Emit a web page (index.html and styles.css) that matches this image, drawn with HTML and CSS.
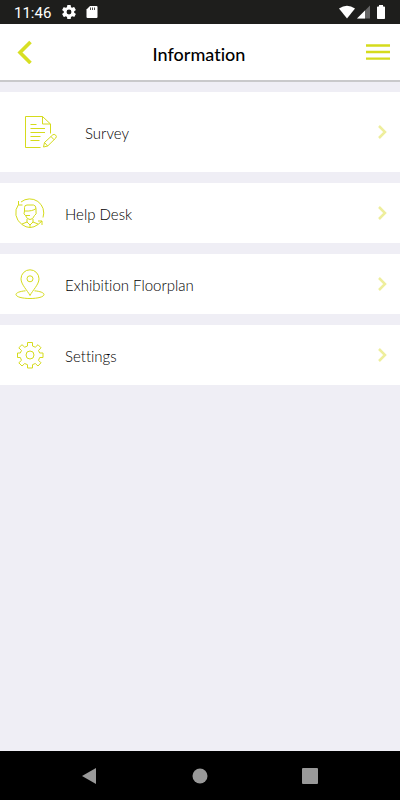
FILE: index.html
```html
<!DOCTYPE html>
<html lang="en">
<head>
  <meta charset="UTF-8" />
  <meta name="viewport" content="width=device-width, initial-scale=1" />
  <title>Information</title>
  <link rel="stylesheet" href="styles.css">
</head>
<body>
  <!-- Status bar -->
  <div class="status-bar">
    <span class="clock">11:46</span>
    <svg class="status-gear" width="14" height="14" viewBox="2 2 20 20" aria-hidden="true">
      <path fill="#fff" d="M19.4 13a7.5 7.5 0 0 0 0-2l2.1-1.65a.5.5 0 0 0 .12-.64l-2-3.46a.5.5 0 0 0-.61-.22l-2.49 1a7.3 7.3 0 0 0-1.69-.98l-.38-2.65A.5.5 0 0 0 14 2h-4a.5.5 0 0 0-.49.42l-.38 2.65c-.61.25-1.17.59-1.69.98l-2.49-1a.5.5 0 0 0-.61.22l-2 3.46a.5.5 0 0 0 .12.64L4.57 11a7.9 7.9 0 0 0 0 2l-2.11 1.65a.5.5 0 0 0-.12.64l2 3.46c.12.22.39.3.61.22l2.49-1c.52.4 1.08.73 1.69.98l.38 2.65c.03.24.24.4.49.4h4c.25 0 .46-.18.49-.42l.38-2.65a7.3 7.3 0 0 0 1.69-.98l2.49 1c.23.09.49 0 .61-.22l2-3.46a.5.5 0 0 0-.12-.64zM12 15.5a3.5 3.5 0 1 1 0-7 3.5 3.5 0 0 1 0 7z"/>
    </svg>
    <svg width="12" height="14" viewBox="0 0 12 14" aria-hidden="true">
      <path fill="#fff" d="M4 1h6.5q1 0 1 1v10q0 1-1 1h-9q-1 0-1-1V4.5z"/>
      <path stroke="#1e1e1c" stroke-width=".8" d="M4.5 2.5v2.5M6.5 2.5v2.5M8.5 2.5v2.5"/>
    </svg>
    <div class="status-right">
      <svg width="16" height="14" viewBox="0 0 16 14" aria-hidden="true">
        <path fill="#fff" d="M0 3.5Q8-2 16 3.5L8 13.5z"/>
      </svg>
      <svg width="14" height="14" viewBox="0 0 14 14" aria-hidden="true">
        <path fill="#666" d="M13 .5V13.5H0z"/>
        <path fill="#fff" d="M8 5.5V13.5H0z"/>
      </svg>
      <svg class="battery" width="8" height="14" viewBox="0 0 8 14" aria-hidden="true">
        <path fill="#fff" d="M2 0h4v1.5h1.200q.8 0 .8.8v10.900q0 .8-.8.8H.8q-.8 0-.8-.8V2.300q0-.8.8-.8H2z"/>
      </svg>
    </div>
  </div>

  <!-- Header -->
  <header class="header">
    <button class="icon-button" aria-label="Back">
      <svg width="16" height="24" viewBox="0 0 16 24"><path fill="none" stroke="#d7df23" stroke-width="3.6" d="M13.5 2L3 12.5 13.5 23"/></svg>
    </button>
    <h1 class="title">Information</h1>
    <button class="icon-button menu-button" aria-label="Menu">
      <svg width="24" height="18" viewBox="0 0 24 18"><path stroke="#d5db1c" stroke-width="2.3" d="M0 2.5h24M0 9h24M0 15.700h24"/></svg>
    </button>
  </header>

  <!-- Menu list -->
  <main class="content">
    <nav class="list">
      <a class="row row-large" href="#">
        <svg class="row-icon" width="34" height="34" viewBox="0 0 34 34">
          <path d="M26.5 18.5V9L18.5 1.5h-17v31h15M18.5 1.5v7.5h8M6.5 9.5h6M6.5 13.5h14.500M6.5 17.500h14.500M6.5 21.500h10M6.5 25.500h9"/>
          <path d="M19.5 32l1-4.500 8.300-7.700q1.300-1 2.800.3t.2 2.900L23.700 31zM20.500 27.500l3.200 3.500M27 21.500l3 3.200"/>
        </svg>
        <span class="row-label">Survey</span>
        <svg class="chevron" width="9" height="14" viewBox="0 0 9 14"><path d="M1 1l6 6-6 6"/></svg>
      </a>
      <a class="row" href="#">
        <svg class="row-icon" width="30" height="30" viewBox="0 0 30 30">
          <path d="M3.500 6.500A14 14 0 0 0 7 26.500Q11 29.500 15 29.500T23 26.500L27 23M3.500 3v4H7.500M6 4A14 14 0 0 1 28 19.500M27 27V23H23"/>
          <path d="M9.500 13V9.500Q9.500 7 12 7h6.500q2.500.5 2.500 3.500V13M9.500 13q8 .5 11.500-2.500M9.500 13q-1.500 3.500 1 4.500 1.500 4 4.500 4t4.500-4q2.500-1 1.500-4.500M10.500 17.500H15M12 21v3l-5 2M18 21v3l5 2M12 24l3 3 3-3M15 27v2"/>
        </svg>
        <span class="row-label">Help Desk</span>
        <svg class="chevron" width="9" height="14" viewBox="0 0 9 14"><path d="M1 1l6 6-6 6"/></svg>
      </a>
      <a class="row" href="#">
        <svg class="row-icon" width="30" height="30" viewBox="0 0 30 30">
          <path d="M15 26.500C12.500 21.500 6 15.500 6 9.800a9 9 0 0 1 18 0C24 15.500 17.500 21.500 15 26.500z"/>
          <circle cx="15" cy="9.800" r="3"/>
          <path d="M10.500 21.800C5 22.300 1 23.700 1 25.500c0 2.300 6 4 14 4s14-1.700 14-4c0-1.800-4-3.200-9.500-3.700"/>
        </svg>
        <span class="row-label">Exhibition Floorplan</span>
        <svg class="chevron" width="9" height="14" viewBox="0 0 9 14"><path d="M1 1l6 6-6 6"/></svg>
      </a>
      <a class="row" href="#">
        <svg class="row-icon" width="30" height="30" viewBox="0 0 30 30">
          <path d="M12.500 2.500h5V6l2.800 1.200L23 4.700 26 7.800l-2.500 2.700 1.200 2.500H28v4.500h-3.300l-1.200 2.800 2.500 2.500-3 3.200-2.700-2.500-2.800 1.200V28h-5v-3.300l-2.800-1.200L7 26l-3.200-3.200 2.700-2.500-1.200-2.800H2.500V13h2.800l1.200-2.500L3.800 7.800 7 4.700l2.700 2.500L12.500 6z"/>
          <circle cx="15" cy="15" r="4"/>
        </svg>
        <span class="row-label">Settings</span>
        <svg class="chevron" width="9" height="14" viewBox="0 0 9 14"><path d="M1 1l6 6-6 6"/></svg>
      </a>
    </nav>
  </main>

  <!-- System navigation -->
  <div class="nav-bar">
    <button class="nav-button" aria-label="System back">
      <svg width="18" height="18" viewBox="0 0 18 18"><path fill="#999" d="M15 1v16L1 9z"/></svg>
    </button>
    <button class="nav-button" aria-label="Home">
      <svg width="16" height="16" viewBox="0 0 16 16"><circle fill="#999" cx="8" cy="8" r="7.5"/></svg>
    </button>
    <button class="nav-button" aria-label="Recent apps">
      <svg width="16" height="16" viewBox="0 0 16 16"><rect fill="#999" width="16" height="16" rx="1"/></svg>
    </button>
  </div>
</body>
</html>
```
FILE: styles.css
```css
* { box-sizing: border-box; margin: 0; padding: 0; }

body {
  display: flex;
  flex-direction: column;
  min-height: 100vh;
  background: #efeef5;
  color: #000;
  font-family: Lato, "Open Sans", sans-serif;
  font-variant-ligatures: none;
}

svg { display: block; }

button {
  background: none;
  border: none;
  cursor: pointer;
}

/* Status bar */
.status-bar {
  display: flex;
  align-items: center;
  height: 24px;
  padding: 0 15px 0 14px;
  background: #1e1e1c;
  color: #fff;
}

.clock {
  padding-top: 2px;
  font: 400 15px/24px Roboto, sans-serif;
}

.status-gear { margin: 0 10px 0 11px; }

.status-right {
  display: flex;
  margin-left: auto;
  gap: 2px;
}

.battery { margin-left: 4px; }

/* Header */
.header {
  display: grid;
  grid-template-columns: 40px 1fr 40px;
  align-items: center;
  height: 58px;
  padding: 0 10px 0 8px;
  background: #fff;
  border-bottom: 2px solid #c9c9cb;
}

.icon-button {
  display: flex;
  align-items: center;
  height: 40px;
  padding-left: 9px;
}

.menu-button {
  justify-content: flex-end;
  padding-left: 0;
}

.title {
  padding-top: 4px;
  font-size: 18px;
  font-weight: 500;
  line-height: 24px;
  text-align: center;
}

/* List */
.content {
  flex: 1;
  padding: 10px 0;
}

.list {
  display: flex;
  flex-direction: column;
  gap: 11px;
}

.row {
  display: flex;
  align-items: center;
  gap: 20px;
  min-height: 60px;
  padding: 0 13px 0 15px;
  background: #fff;
  color: #000;
  text-decoration: none;
}

.row-large {
  gap: 27px;
  min-height: 80px;
  padding-left: 24px;
}

.row-icon {
  fill: none;
  stroke: #d5db1c;
  stroke-width: 1;
  flex: none;
}

.row-label {
  flex: 1;
  padding-top: 2px;
  font-size: 15px;
  font-weight: 300;
  line-height: 20px;
}

.chevron {
  fill: none;
  stroke: #eeee9c;
  stroke-width: 2.5;
}

/* System navigation */
.nav-bar {
  display: flex;
  justify-content: center;
  gap: 70px;
  height: 49px;
  background: #000;
}

.nav-button {
  display: flex;
  align-items: center;
  justify-content: center;
  width: 40px;
}
```
